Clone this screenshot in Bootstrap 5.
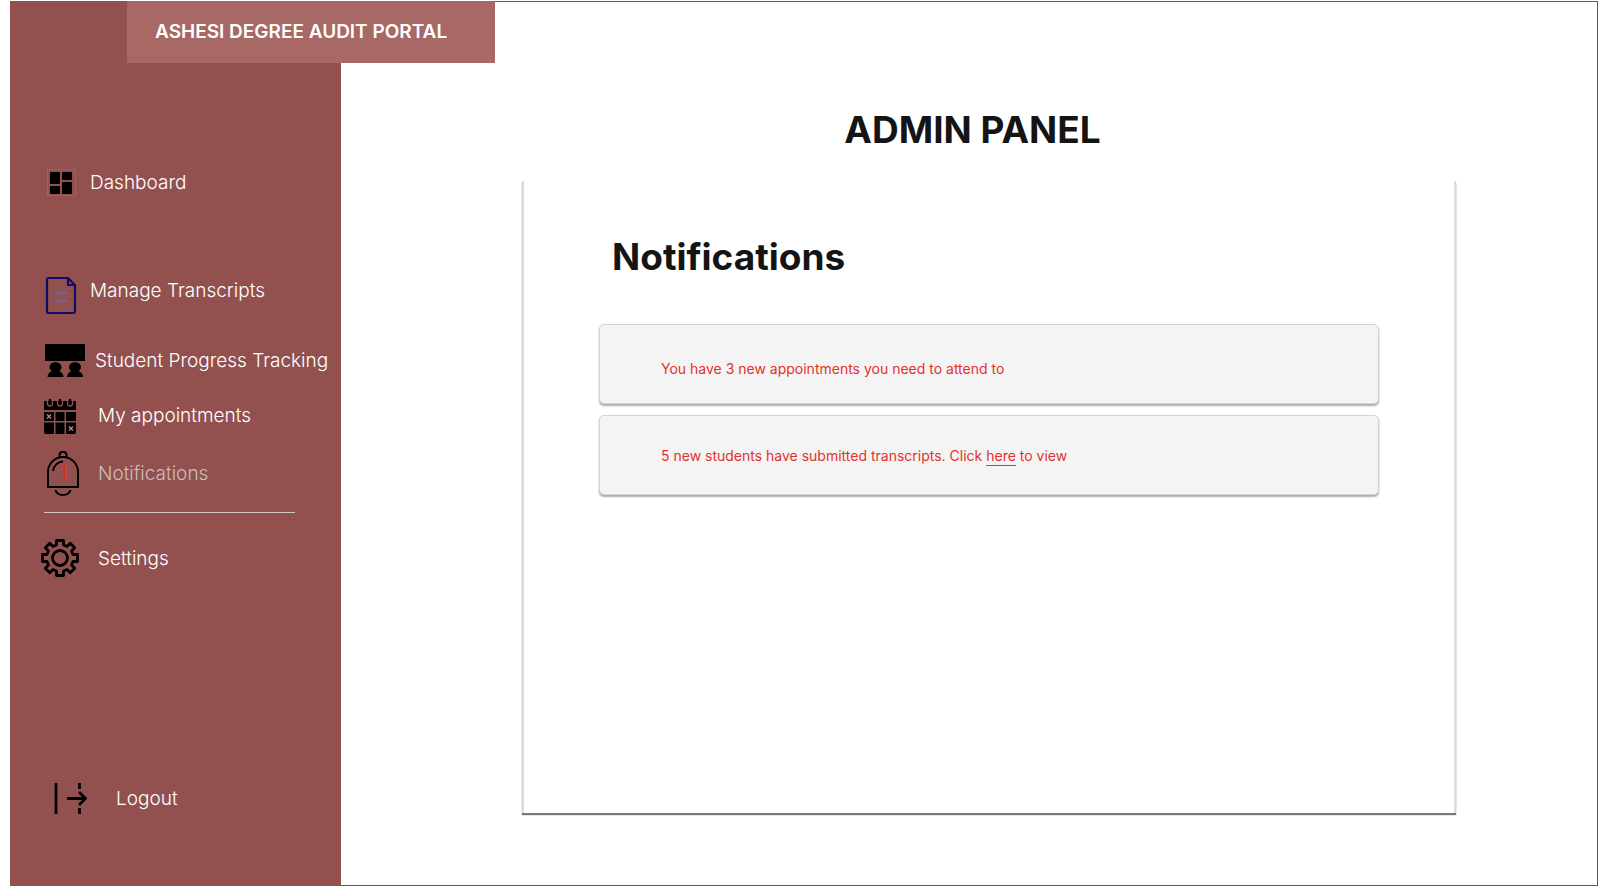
<!DOCTYPE html>
<html lang="en">
<head>
<meta charset="utf-8">
<meta name="viewport" content="width=device-width, initial-scale=1">
<title>Ashesi Degree Audit Portal</title>
<link rel="stylesheet" href="https://cdn.jsdelivr.net/npm/bootstrap@5.3.0/dist/css/bootstrap.min.css">
<style>
  body { font-family: Inter, "Liberation Sans", sans-serif; background: #fff; color: #141414; }
  .page { padding: 1px 10px 6px; }
  .frame { border: 1px solid #5c5c5c; border-left: 0; }
  .brand { top: -1px; left: 117px; width: 368px; height: 62px; padding-left: 28px; background: #a86865; color: #fff; font-size: 19px; font-weight: 600; z-index: 2; }
  .sidebar { width: 331px; margin: -1px 0; padding: 158px 0 63px 31px; background: #92514f; }
  .sidebar .nav-link { color: #fff; font-size: 19px; font-weight: 300; line-height: 24px; padding: 0; gap: 11px; white-space: nowrap; }
  .sidebar .nav-link.near { gap: 3px; }
  .sidebar .nav-link.mid { gap: 8px; }
  .sidebar .nav-link.far { gap: 29px; }
  .sidebar .nav-link.active { color: #c9bebe; }
  .sidebar svg { width: 46px; height: 48px; flex: none; }
  .space-xl { margin-bottom: 60px; }
  .space-lg { margin-bottom: 22px; }
  .space-sm { margin-bottom: 7px; }
  .space-md { margin-bottom: 10px; }
  .rule { width: 251px; margin: 14px 0 22px 3px; border-top: 1px solid #d5c5c5; opacity: 1; }
  .content { padding: 106px 141px 72px 181px; }
  .title { font-size: 37px; line-height: 44px; font-weight: 700; margin: 0; }
  .main-title { margin: 0 33px 29px 0; }
  .panel { padding: 54px 75px 40px; border: solid #dcdcdc; border-width: 0 2px; box-shadow: 0 2px 1px #777; }
  .panel .title { padding-left: 13px; margin-bottom: 45px; }
  .notices { gap: 11px; }
  .notice { min-height: 80px; padding: 1px 0 0 61px; background: #f4f4f4; color: #e1332b; font-size: 14px; line-height: 20px; border: 1px solid #d4d4d4; border-radius: 5px; box-shadow: 0 2px 2px #aaa; }
  .notice:first-child { padding-top: 10px; }
  .notice a { color: inherit; text-underline-offset: 4px; }
</style>
</head>
<body>
<div class="page d-flex min-vh-100">
  <div class="frame d-flex flex-grow-1 position-relative">
    <header class="brand position-absolute d-flex align-items-center">ASHESI DEGREE AUDIT PORTAL</header>

    <nav class="sidebar d-flex flex-column flex-shrink-0" aria-label="Main">
      <a href="#" class="nav-link near space-xl d-flex align-items-center">
        <svg viewBox="0 0 46 48" aria-hidden="true"><rect x="6.5" y="10.5" width="28" height="26" fill="none" stroke="#a3605e"/><rect x="9" y="13" width="10" height="12" rx="1"/><rect x="21" y="13" width="10" height="8" rx="1"/><rect x="9" y="27" width="10" height="8" rx="1"/><rect x="21" y="23" width="10" height="12" rx="1"/></svg>
        <span>Dashboard</span>
      </a>
      <a href="#" class="nav-link near space-lg d-flex align-items-center">
        <svg viewBox="0 0 46 48" aria-hidden="true" fill="none" stroke="#0d0d68" stroke-width="2.200" stroke-linejoin="round"><path d="M8 11h19l7 7v26a2 2 0 0 1-2 2H8a2 2 0 0 1-2-2V13a2 2 0 0 1 2-2z"/><path d="M27 11v7h7"/><path d="M14 26h12M14 34h12" stroke="#6b62a8" stroke-linecap="round"/></svg>
        <span>Manage Transcripts</span>
      </a>
      <a href="#" class="nav-link mid space-sm d-flex align-items-center">
        <svg viewBox="0 0 46 48" aria-hidden="true"><path d="M4 7h40v17H4z"/><path id="person" d="M6.500 40c0-3 2-5 4.500-6-2-1-2.500-2.500-2.500-3.500a6 5.500 0 0 1 12 0c0 1-.5 2.500-2.500 3.500 2.500 1 4.500 3 4.500 6z"/><use href="#person" x="19.500"/></svg>
        <span>Student Progress Tracking</span>
      </a>
      <a href="#" class="nav-link space-md d-flex align-items-center">
        <svg viewBox="0 0 46 48" aria-hidden="true"><path d="M3 9h32v9H3zM3 20h10v9H3zM14.500 20h9v9h-9zM25 20h10v9H25zM3 30.500h10V42H5a2 2 0 0 1-2-2zM14.500 30.500h9V42h-9zM25 30.500h10V40a2 2 0 0 1-2 2h-8z"/><g fill="none" stroke="#92514f"><path d="M6.500 7v4.500a2.500 2.500 0 0 0 5 0V7M16.500 7v4.500a2.500 2.500 0 0 0 5 0V7M26.500 7v4.500a2.500 2.500 0 0 0 5 0V7" stroke-width="1.300"/><path d="M6 22.500l4 4m0-4l-4 4M28 34.500l4 4m0-4l-4 4" stroke="#c08a87" stroke-width="1.300"/></g><path d="M9 8v3M19 8v3M29 8v3" stroke="#000" stroke-width="2.400" stroke-linecap="round"/></svg>
        <span>My appointments</span>
      </a>
      <a href="#" class="nav-link active d-flex align-items-center" aria-current="page">
        <svg viewBox="0 0 46 48" aria-hidden="true"><g fill="none" stroke="#000" stroke-width="2"><path d="M7 37V22a15 15 0 0 1 30 0v15z"/><path d="M18.500 7V5a3 3 0 0 1 3-3h1a3 3 0 0 1 3 3v2M14.500 40c2 6.500 13 6.500 15 0"/><path d="M12 21c1-6 4-9 10-9.500"/></g><text x="22.500" y="29" text-anchor="middle" font-size="19" font-weight="400" fill="#f0281e">1</text></svg>
        <span>Notifications</span>
      </a>
      <hr class="rule">
      <a href="#" class="nav-link d-flex align-items-center">
        <svg viewBox="0 0 46 48" aria-hidden="true" fill="none" stroke="#000" stroke-width="2.800" stroke-linejoin="round"><circle cx="19" cy="23" r="7.500"/><path d="M15.500 5.500h7v4.500l3.500 1.500 3.200-3.200 4.500 4.500-3.200 3.200 1.500 3.500h4.500v7h-4.500l-1.500 3.500 3.200 3.200-4.500 4.500-3.200-3.200-3.500 1.500v4.500h-7v-4.500l-3.500-1.500-3.200 3.200-4.500-4.500 3.200-3.200-1.500-3.500h-4.500v-7h4.500l1.500-3.500-3.200-3.200 4.500-4.500 3.200 3.200 3.500-1.500z"/></svg>
        <span>Settings</span>
      </a>
      <a href="#" class="nav-link far mt-auto d-flex align-items-center">
        <svg viewBox="0 0 46 48" aria-hidden="true" fill="none" stroke="#000" stroke-width="2.800"><path d="M15 8v31M38.500 8v6M38.500 33v6M26 23.500h18M38 17l6.500 6.500L38 30"/></svg>
        <span>Logout</span>
      </a>
    </nav>

    <main class="content d-flex flex-column flex-grow-1">
      <h1 class="title main-title text-center">ADMIN PANEL</h1>
      <section class="panel flex-grow-1">
        <h2 class="title">Notifications</h2>
        <div class="notices d-flex flex-column">
          <div class="notice d-flex align-items-center"><span>You have 3 new appointments you need to attend to</span></div>
          <div class="notice d-flex align-items-center"><span>5 new students have submitted transcripts. Click <a href="#">here</a> to view</span></div>
        </div>
      </section>
    </main>
  </div>
</div>
<script src="https://cdn.jsdelivr.net/npm/bootstrap@5.3.0/dist/js/bootstrap.bundle.min.js"></script>
</body>
</html>
